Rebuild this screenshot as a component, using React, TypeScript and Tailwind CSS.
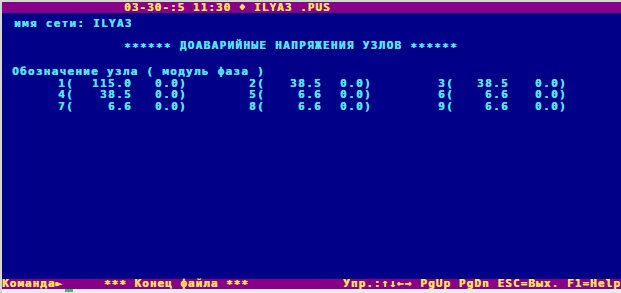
const rows = [
  ['1(', '115.0', '0.0)', '2(', '38.5', '0.0)', '3(', '38.5', '0.0)'],
  ['4(', '38.5', '0.0)', '5(', '6.6', '0.0)', '6(', '6.6', '0.0)'],
  ['7(', '6.6', '0.0)', '8(', '6.6', '0.0)', '9(', '6.6', '0.0)'],
]

function Stars() {
  return <span className="inline-block translate-y-[2px]">******</span>
}

export default function App() {
  return (
    <div className="w-[621px] h-[293px] bg-[#d6d6d6] pt-[2px] pl-[2px] flex flex-col overflow-hidden font-['DejaVu_Sans_Mono','Liberation_Mono',monospace] font-bold text-[11px] whitespace-pre [text-shadow:0.45px_0_0_currentColor]">
      {/* title bar */}
      <div className="h-[11px] shrink-0 bg-[#880088] text-[#ffe35a] leading-[11px] tracking-[1.03px] pl-[122px]">
        03-30-:5 11:30 ♦ ILYA3 .PUS
      </div>

      {/* screen */}
      <div className="flex-1 bg-[#000088] text-[#55e6ff]">
        <div className="pt-[5px] pl-[12px] leading-[11px] tracking-[1.28px]">имя сети: ILYA3</div>
        <div className="mt-[11px] pl-[122px] leading-[11px] tracking-[1.33px]">
          <Stars /> ДОАВАРИЙНЫЕ НАПРЯЖЕНИЯ УЗЛОВ <Stars />
        </div>
        <div className="mt-[15px] leading-[11.5px]">
          <div className="pl-[10px] tracking-[1.28px]">Обозначение узла ( модуль фаза )</div>
          <div className="grid grid-cols-[72px_58px_55px_78px_57px_50px_82px_55px_58px] tracking-[1.4px] text-right">
            {rows.map((r, i) =>
              r.map((cell, j) => <span key={i + '-' + j}>{cell}</span>)
            )}
          </div>
        </div>
      </div>

      {/* status line */}
      <div className="h-[10px] shrink-0 bg-[#880088] text-[#ffe35a] leading-[10px] flex">
        <span className="w-[102px] tracking-[1px]">Команда►</span>
        <span className="tracking-[1px]">
          <span className="inline-block translate-y-[1px]">***</span> Конец файла{' '}
          <span className="inline-block translate-y-[1px]">***</span>
        </span>
        <span className="ml-auto tracking-[1.1px]">Упр.:↑↓←→ PgUp PgDn ESC=Вых. F1=Help</span>
      </div>
      <div className="h-[4px] shrink-0 bg-[#ececec]">
        <div className="ml-[63px] w-[8px] h-[3px] bg-[#3cbf5a]" />
      </div>
    </div>
  )
}
